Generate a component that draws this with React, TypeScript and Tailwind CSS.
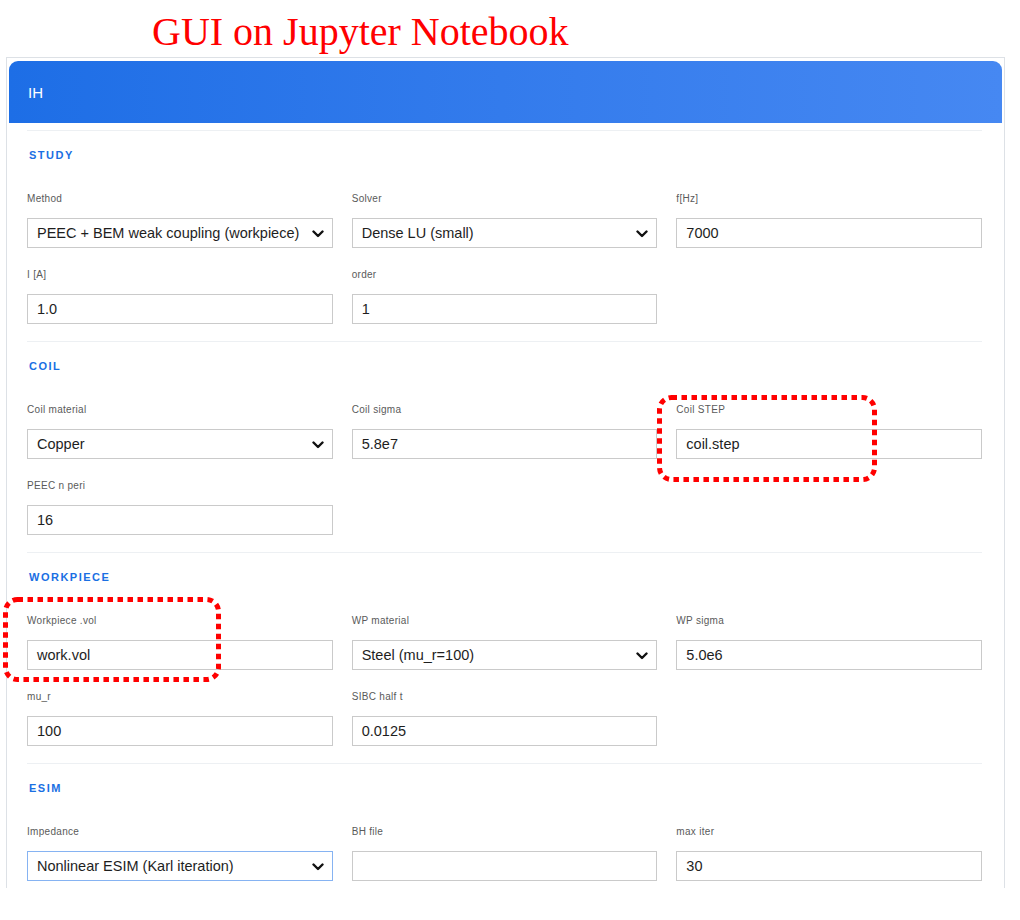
type Field = {
  label: string;
  value: string;
  kind?: "select" | "text";
  focused?: boolean;
};

type Section = {
  title: string;
  rows: Field[][];
};

const sections: Section[] = [
  {
    title: "STUDY",
    rows: [
      [
        { label: "Method", value: "PEEC + BEM weak coupling (workpiece)", kind: "select" },
        { label: "Solver", value: "Dense LU (small)", kind: "select" },
        { label: "f[Hz]", value: "7000" },
      ],
      [
        { label: "I [A]", value: "1.0" },
        { label: "order", value: "1" },
      ],
    ],
  },
  {
    title: "COIL",
    rows: [
      [
        { label: "Coil material", value: "Copper", kind: "select" },
        { label: "Coil sigma", value: "5.8e7" },
        { label: "Coil STEP", value: "coil.step" },
      ],
      [{ label: "PEEC n peri", value: "16" }],
    ],
  },
  {
    title: "WORKPIECE",
    rows: [
      [
        { label: "Workpiece .vol", value: "work.vol" },
        { label: "WP material", value: "Steel (mu_r=100)", kind: "select" },
        { label: "WP sigma", value: "5.0e6" },
      ],
      [
        { label: "mu_r", value: "100" },
        { label: "SIBC half t", value: "0.0125" },
      ],
    ],
  },
  {
    title: "ESIM",
    rows: [
      [
        { label: "Impedance", value: "Nonlinear ESIM (Karl iteration)", kind: "select", focused: true },
        { label: "BH file", value: "" },
        { label: "max iter", value: "30" },
      ],
    ],
  },
];

function Chevron() {
  return (
    <svg className="h-[8px] w-[12px]" viewBox="0 0 12 8" fill="none">
      <path d="M1.5 1.5L6 6L10.5 1.5" stroke="#111" strokeWidth={2.4} strokeLinecap="round" strokeLinejoin="round" />
    </svg>
  );
}

function FieldBox({ field }: { field: Field }) {
  return (
    <div>
      <div className="mb-[13px] h-[12px] text-[10px] leading-[12px] tracking-[0.3px] text-[#5a5a5a]">
        {field.label}
      </div>
      <div
        className={`flex h-[30px] items-center justify-between border bg-white pl-[9px] pr-[8px] pt-[1px] text-[14.5px] text-[#1e1e1e] ${
          field.focused ? "border-[#86b3f2]" : "border-[#cacaca]"
        }`}
      >
        <span>{field.value}</span>
        {field.kind === "select" && <Chevron />}
      </div>
    </div>
  );
}

// rounded dotted call-out frame
function Callout({ className }: { className: string }) {
  return (
    <svg className={`pointer-events-none absolute ${className}`} fill="none">
      <rect
        x="2.5"
        y="2.5"
        width="calc(100% - 5px)"
        height="calc(100% - 5px)"
        rx="12"
        stroke="#ff0000"
        strokeWidth={5}
        strokeDasharray="5.5 4.5"
      />
    </svg>
  );
}

export default function App() {
  return (
    <div className="relative min-h-[920px] w-[1020px] bg-white font-['Liberation_Sans',Arial,sans-serif]">
      <div className="h-[57px] pl-[152px] pt-[12px] font-['Liberation_Serif','Times_New_Roman',serif] text-[40px] leading-[40px] text-[#ff0000]">
        GUI on Jupyter Notebook
      </div>

      <div className="ml-[6px] w-[999px] border border-b-0 border-[#dde1e6] px-[2px] pt-[3px]">
        <div className="flex h-[62px] items-center rounded-t-[9px] bg-linear-to-r from-[#1d6ee6] to-[#4688f2] pl-[19px] pt-[2px] text-[15px] text-white">
          IH
        </div>

        <div className="pl-[18px] pr-[20px] pt-[7px]">
          {sections.map((section, i) => (
            <div
              key={section.title}
              className={`border-t border-[#edf0f3] pt-[18px] ${i === sections.length - 1 ? "pb-[7px]" : "pb-[17px]"}`}
            >
              <div className="h-[12px] pl-[2px] text-[11px] font-bold leading-[12px] tracking-[1.5px] text-[#1a6fe3]">
                {section.title}
              </div>
              <div className="mt-[32px] grid grid-cols-3 gap-x-[19px] gap-y-[21px]">
                {section.rows.flatMap((row) => {
                  const cells = row.map((f) => <FieldBox key={f.label} field={f} />);
                  while (cells.length < 3) cells.push(<div key={`pad-${row[0].label}-${cells.length}`} />);
                  return cells;
                })}
              </div>
            </div>
          ))}
        </div>
      </div>

      <Callout className="left-[657px] top-[395px] h-[87px] w-[220px]" />
      <Callout className="left-[3px] top-[597px] h-[85px] w-[218px]" />
    </div>
  );
}
